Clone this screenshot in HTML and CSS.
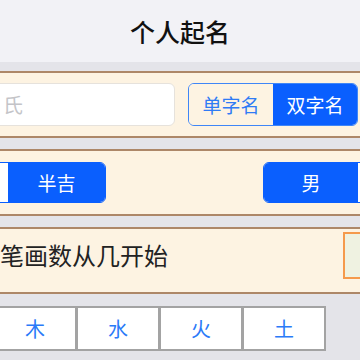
FILE: index.html
```html
<!DOCTYPE html>
<html lang="zh">
<head>
    <meta charset="UTF-8">
    <title>个人起名</title>
    <meta name="viewport" content="width=device-width, initial-scale=1.0">
    <link rel="stylesheet" href="styles.css">
</head>
<body>
    <div class="nav-bar">个人起名</div>

    <!-- surname + name length -->
    <div class="panel panel-name">
        <div class="surname-input">氏</div>
        <div class="segment seg-length">
            <div class="seg-item">单字名</div>
            <div class="seg-item active">双字名</div>
        </div>
    </div>

    <!-- luck + gender -->
    <div class="panel panel-pick">
        <div class="segment seg-luck">
            <div class="seg-item"></div>
            <div class="seg-item active">半吉</div>
        </div>
        <div class="segment seg-gender">
            <div class="seg-item active">男</div>
            <div class="seg-item"></div>
        </div>
    </div>

    <!-- stroke count -->
    <div class="panel panel-stroke">
        <div class="stroke-label">笔画数从几开始</div>
        <div class="stroke-input"></div>
    </div>

    <div class="element-row">
        <div class="element-cell">木</div>
        <div class="element-cell">水</div>
        <div class="element-cell">火</div>
        <div class="element-cell">土</div>
    </div>
</body>
</html>
```

FILE: styles.css
```css
body {
    margin: 0;
    width: 360px;
    height: 360px;
    overflow: hidden;
    background: #e4e4e9;
    font-family: "Noto Sans CJK SC", "Noto Sans", sans-serif;
}
.nav-bar {
    height: 62px;
    line-height: 62px;
    background: #f2f2f6;
    text-align: center;
    font-size: 25px;
    font-weight: 500;
    color: #111;
    margin-bottom: 9px;
}
.panel {
    display: flex;
    align-items: center;
    justify-content: space-between;
    background: #fdf3e2;
    border-top: 2px solid #ad8768;
    border-bottom: 2px solid #ad8768;
    box-sizing: border-box;
    height: 67px;
    margin-bottom: 11px;
    overflow: hidden;
}
.surname-input {
    width: 185px;
    height: 43px;
    margin-left: -10px;
    box-sizing: border-box;
    padding-left: 12px;
    background: #fff;
    border: 1px solid #e6e2dc;
    border-radius: 6px;
    line-height: 41px;
    font-size: 20px;
    color: #c4c4c8;
}
.segment {
    display: flex;
    height: 43px;
    box-sizing: border-box;
    border: 1.5px solid #3f86f7;
    border-radius: 6px;
    overflow: hidden;
}
.seg-item {
    display: flex;
    align-items: center;
    justify-content: center;
    font-size: 19px;
    color: #2f7bf5;
    background: #fdf3e2;
}
.seg-item.active {
    background: #0a5ffe;
    color: #fff;
}
.seg-length {
    margin-right: 2px;
    width: 170px;
}
.seg-length .seg-item {
    flex: 1;
}
.seg-luck {
    height: 41px;
    margin-left: -40px;
    border-color: #0a5ffe;
}
.seg-luck .seg-item {
    width: 97px;
}
.seg-luck .seg-item:first-child {
    width: 47px;
    background: #fff;
}
.seg-gender {
    height: 41px;
    margin-right: -79px;
    border-color: #0a5ffe;
}
.seg-gender .seg-item {
    width: 94px;
}
.seg-gender .seg-item:last-child {
    width: 80px;
    background: #fff;
}
.panel-stroke {
    margin-bottom: 0;
}
.stroke-label {
    font-size: 24px;
    color: #222;
    margin-top: -12px;
}
.stroke-input {
    width: 60px;
    height: 47px;
    box-sizing: border-box;
    margin-right: -43px;
    margin-top: -10px;
    background: #eff2e1;
    border: 2px solid #f59a4c;
}
.element-row {
    display: flex;
    margin: 12px 0 0 -7px;
}
.element-cell {
    width: 84px;
    height: 45px;
    box-sizing: border-box;
    background: #fff;
    border: 2px solid #a3a3a3;
    margin-right: -1px;
    display: flex;
    align-items: center;
    justify-content: center;
    font-size: 20px;
    color: #2a7af8;
}
```
